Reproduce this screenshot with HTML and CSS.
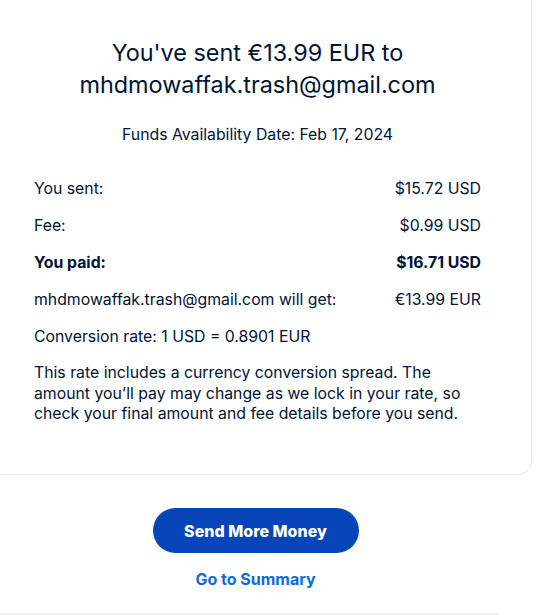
FILE: index.html
```html
<!DOCTYPE html>
<html lang="en">
<head>
<meta charset="utf-8">
<title>Sent</title>
<link rel="stylesheet" href="styles.css">
</head>
<body>
<div class="page">
  <section class="card">
    <h1 class="title">You've sent €13.99 EUR to<br>mhdmowaffak.trash@gmail.com</h1>
    <p class="date">Funds Availability Date: Feb 17, 2024</p>
    <div class="rows">
      <div class="row"><span>You sent:</span><span>$15.72 USD</span></div>
      <div class="row"><span>Fee:</span><span>$0.99 USD</span></div>
      <div class="row strong"><span>You paid:</span><span>$16.71 USD</span></div>
      <div class="row"><span>mhdmowaffak.trash@gmail.com will get:</span><span>€13.99 EUR</span></div>
      <div class="row"><span>Conversion rate: 1 USD = 0.8901 EUR</span></div>
    </div>
    <p class="note">This rate includes a currency conversion spread. The amount you’ll pay may change as we lock in your rate, so check your final amount and fee details before you send.</p>
  </section>
  <div class="actions">
    <button class="primary">Send More Money</button>
    <a class="link" href="#">Go to Summary</a>
  </div>
  <div class="rule"></div>
</div>
</body>
</html>
```

FILE: styles.css
```css
* { box-sizing: border-box; }
html, body { margin: 0; padding: 0; background: #fff; }
body {
  font-family: Inter, "Liberation Sans", Arial, sans-serif;
  color: #001435;
  width: 547px;
  height: 615px;
  overflow: hidden;
}
.page {
  display: flex;
  flex-direction: column;
}
.card {
  margin: -20px 0 0 -20px;
  width: 552px;
  border: 1px solid #ebebeb;
  border-radius: 0 0 14px 0;
  padding: 56px 50px 49px 53px;
  height: 495px;
}
.title {
  margin: 0;
  text-align: center;
  font-size: 23.4px;
  font-weight: 400;
  line-height: 32px;
}
.date {
  margin: 24px 0 0;
  text-align: center;
  font-size: 15.8px;
  line-height: 20px;
}
.rows {
  margin-top: 34px;
  display: flex;
  flex-direction: column;
  gap: 17px;
}
.row {
  display: flex;
  justify-content: space-between;
  font-size: 15.8px;
  line-height: 20px;
}
.row.strong { font-weight: 700; }
.note {
  margin: 16px 0 0;
  font-size: 15.8px;
  line-height: 20.5px;
}
.actions {
  display: flex;
  flex-direction: column;
  align-items: center;
  padding-top: 33px;
  padding-right: 36px;
}
.primary {
  width: 206px;
  height: 45px;
  border: none;
  border-radius: 23px;
  background: #0745b8;
  color: #fff;
  font-family: Inter, "Liberation Sans", Arial, sans-serif;
  font-weight: 800;
  font-size: 16px;
}
.link {
  margin-top: 16px;
  color: #0a6ce0;
  font-weight: 700;
  font-size: 16px;
  line-height: 20px;
  text-decoration: none;
}
.rule {
  margin-top: 24px;
  width: 499px;
  height: 2px;
  background: #efefef;
}
```
